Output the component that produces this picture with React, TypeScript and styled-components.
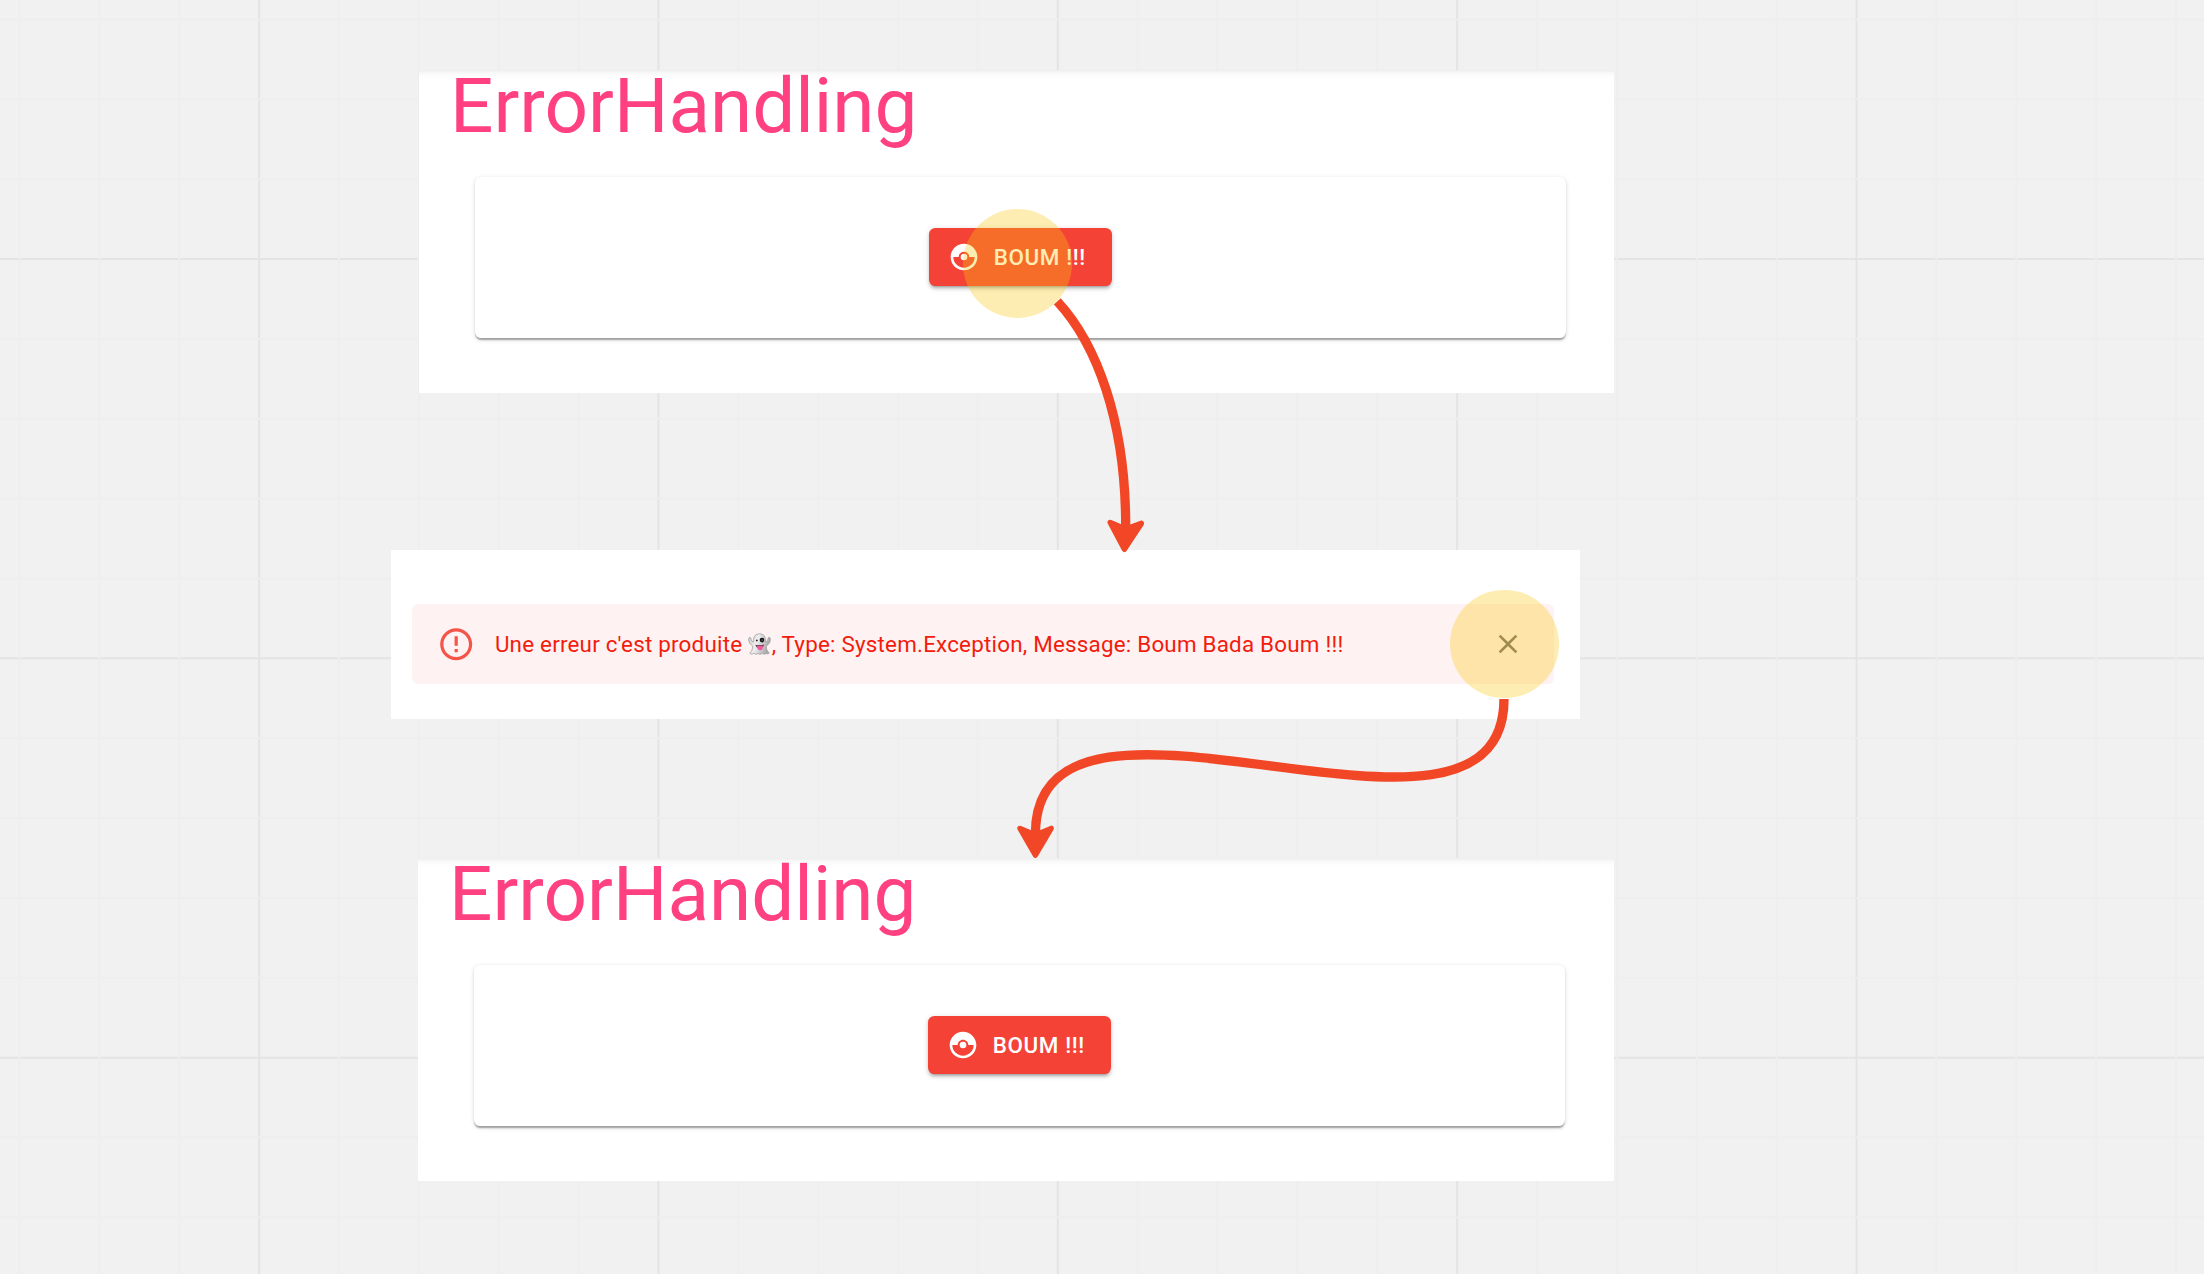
import React from "react";
import styled, { createGlobalStyle } from "styled-components";
import { MdCatchingPokemon, MdClose, MdErrorOutline } from "react-icons/md";

const GlobalStyle = createGlobalStyle`
  body {
    margin: 0;
    background: #f1f1f1;
    font-family: Roboto, "Liberation Sans", sans-serif;
  }
`;

const Board = styled.main`
  position: relative;
  width: 2204px;
  height: 1274px;
  overflow: hidden;
  background: #f1f1f1;
`;

const Layer = styled.svg`
  position: absolute;
  inset: 0;
  width: 2204px;
  height: 1274px;
  pointer-events: none;
`;

const Frame = styled.section<{ $x: number; $y: number; $w: number; $h: number }>`
  position: absolute;
  left: ${(p) => p.$x}px;
  top: ${(p) => p.$y}px;
  width: ${(p) => p.$w}px;
  height: ${(p) => p.$h}px;
  box-sizing: border-box;
  background: #fff;
`;

const PageFrame = styled(Frame)`
  display: flex;
  flex-direction: column;
  align-items: flex-start;
  background: linear-gradient(#ededed 0, #f1f1f1 1px, #f8f8f8 3px, #fdfdfd 6px, #fff 9px);
`;

const Title = styled.h3`
  margin: -8px 0 0 31px;
  height: 114.6px;
  font-size: 76.4px;
  font-weight: 400;
  line-height: 89.6px;
  color: #ff4081;
`;

const Paper = styled.div`
  display: flex;
  align-items: center;
  justify-content: center;
  width: 1091px;
  height: 161px;
  margin-left: 56px;
  border-radius: 6.4px;
  background: #fff;
  box-shadow:
    0 3.2px 1.6px -1.6px rgba(0, 0, 0, 0.2),
    0 1.6px 1.6px 0 rgba(0, 0, 0, 0.14),
    0 1.6px 4.8px 0 rgba(0, 0, 0, 0.12);
`;

const BoomButton = styled.button`
  display: flex;
  align-items: center;
  gap: 13.6px;
  height: 58.8px;
  padding: 0 26.4px 0 19.4px;
  border: 0;
  border-radius: 6.4px;
  background: #f44336;
  color: #fff;
  font: 500 22.4px/39.2px Roboto, sans-serif;
  letter-spacing: 0.64px;
  white-space: nowrap;
  box-shadow:
    0 4px 2px -3px rgba(0, 0, 0, 0.2),
    0 2.5px 3px 0 rgba(0, 0, 0, 0.14),
    0 1.6px 6px 0 rgba(0, 0, 0, 0.12);
  svg {
    width: 32px;
    height: 32px;
  }
`;

const ButtonLabel = styled.span`
  padding-top: 1.6px;
`;

const AlertFrame = styled(Frame)`
  padding: 54px 26px 35px 21px;
`;

const Alert = styled.div`
  display: flex;
  align-items: center;
  height: 80px;
  box-sizing: border-box;
  padding: 0 30.3px 0 25.2px;
  border-radius: 6.4px;
  background: #fff2f2;
  color: #f21c0d;
`;

const AlertIcon = styled(MdErrorOutline)`
  width: 38.4px;
  height: 38.4px;
  margin-right: 19.3px;
  color: #f44336;
  opacity: 0.9;
`;

const Message = styled.span`
  flex: 1;
  font-size: 22.4px;
  line-height: 32px;
  letter-spacing: 0.215px;
  white-space: nowrap;
`;

const GhostIcon = styled.svg`
  width: 23px;
  height: 22px;
  margin: 0 0.6px 0 0;
  vertical-align: -3px;
`;

const CloseButton = styled.button`
  display: flex;
  padding: 0;
  border: 0;
  background: none;
  color: rgba(0, 0, 0, 0.54);
  svg {
    width: 32px;
    height: 32px;
  }
`;

const Spot = styled.div<{ $cx: number; $cy: number }>`
  position: absolute;
  left: ${(p) => p.$cx - 54.4}px;
  top: ${(p) => p.$cy - 54.4}px;
  width: 108.8px;
  height: 108.8px;
  border-radius: 50%;
  background: rgba(252, 200, 16, 0.32);
`;

const STEP = 79.87;
const ORIGIN = 19.5;
const lines = Array.from({ length: 28 }, (_, i) => ({
  at: ORIGIN + i * STEP,
  major: i % 5 === 3,
}));

function GridLines({ major }: { major: boolean }) {
  const d = lines
    .filter((l) => l.major === major)
    .map((l) => `M${l.at.toFixed(2)} 0V1274M0 ${(l.at - 0.1).toFixed(2)}H2204`)
    .join("");
  return <path d={d} stroke={major ? "#e4e4e4" : "#eeeeee"} strokeWidth={2} fill="none" />;
}

function Ghost() {
  return (
    <GhostIcon viewBox="0 0 23 22" role="img" aria-label="fantôme">
      <defs>
        <linearGradient id="ghost" x1="0" x2="1" y1="0" y2="0.3">
          <stop offset="0" stopColor="#c8c8ca" />
          <stop offset="0.45" stopColor="#efefef" />
          <stop offset="1" stopColor="#a8a8ab" />
        </linearGradient>
      </defs>
      <path
        d="M11.5 .8C7.7 .8 5.8 3.3 5.5 6.3L5.3 9 3.3 7.7C3.2 5.6 2.7 4.4 1.9 4.3 1.1 4.2.6 5.5.6 6.5.6 9.8 3.4 12 4.7 13.3 4.6 16.2 3.5 18.6 1.8 20.2 2.8 21.5 4.6 21.5 5.9 20.2 7.4 21.7 9.1 21.4 10 20.4 11.4 21.7 13.2 21.5 14.3 20.3 15.7 21.5 17.1 21.4 18 20.2 19.1 21.3 20.4 20.9 21.3 19.9 19.3 18.5 18.4 16.2 18.2 13.3 20.4 11.5 22.4 9.5 22.4 6.5 22.4 5.3 21.9 4.3 21.1 4.3 20.1 4.4 19.8 5.8 19.7 7.6L17.6 9 17.4 6.2C17 2.8 15.2 .8 11.5 .8Z"
        fill="url(#ghost)"
        stroke="#979598"
        strokeWidth=".7"
      />
      <ellipse cx="8.8" cy="7.4" rx="1.6" ry="1.7" fill="#fff" />
      <circle cx="8.8" cy="7.4" r="1" fill="#222" />
      <circle cx="14" cy="7.1" r="2.3" fill="#171717" />
      <circle cx="14.2" cy="7" r=".6" fill="#aaa" />
      <path d="M7.5 11.7Q11.7 13.1 15.9 11.5Q15.6 15 11.8 15Q8 15 7.5 11.7Z" fill="#5a2337" />
      <path d="M8.9 12.7Q11.8 13.5 14.8 12.5V15.2Q14.2 17.3 12 17.2Q9.3 17 8.9 12.7Z" fill="#f2569b" />
    </GhostIcon>
  );
}

function ErrorPage({ x, y, w }: { x: number; y: number; w: number }) {
  return (
    <PageFrame $x={x} $y={y} $w={w} $h={323}>
      <Title>ErrorHandling</Title>
      <Paper>
        <BoomButton>
          <MdCatchingPokemon />
          <ButtonLabel>BOUM !!!</ButtonLabel>
        </BoomButton>
      </Paper>
    </PageFrame>
  );
}

function Arrows() {
  return (
    <Layer fill="none" stroke="#f24726" strokeLinejoin="round">
      <path d="M1057.3 301.3C1096 343 1126 420 1125.7 528" strokeWidth={9.3} />
      <path
        d="M1110.2 522.4L1125.7 529L1141.4 523.4L1124.4 549.3Z"
        fill="#f24726"
        strokeWidth={5.4}
      />
      <path d="M1504 699C1504 894 1035.4 637 1035.4 834" strokeWidth={9.4} />
      <path
        d="M1020 828.4L1035.4 835L1051.2 828.4L1035.4 855.2Z"
        fill="#f24726"
        strokeWidth={5.4}
      />
    </Layer>
  );
}

export default function App() {
  return (
    <>
      <GlobalStyle />
      <Board>
        <Layer>
          <GridLines major />
          <GridLines major={false} />
        </Layer>
        <ErrorPage x={419} y={70} w={1195} />
        <AlertFrame $x={391} $y={550} $w={1189} $h={169}>
          <Alert>
            <AlertIcon />
            <Message>
              Une erreur c'est produite <Ghost />, Type: System.Exception, Message: Boum Bada Boum !!!
            </Message>
            <CloseButton aria-label="Fermer">
              <MdClose />
            </CloseButton>
          </Alert>
        </AlertFrame>
        <ErrorPage x={418} y={858} w={1196} />
        <Spot $cx={1017.3} $cy={263.2} />
        <Spot $cx={1504.3} $cy={643.9} />
        <Arrows />
      </Board>
    </>
  );
}
